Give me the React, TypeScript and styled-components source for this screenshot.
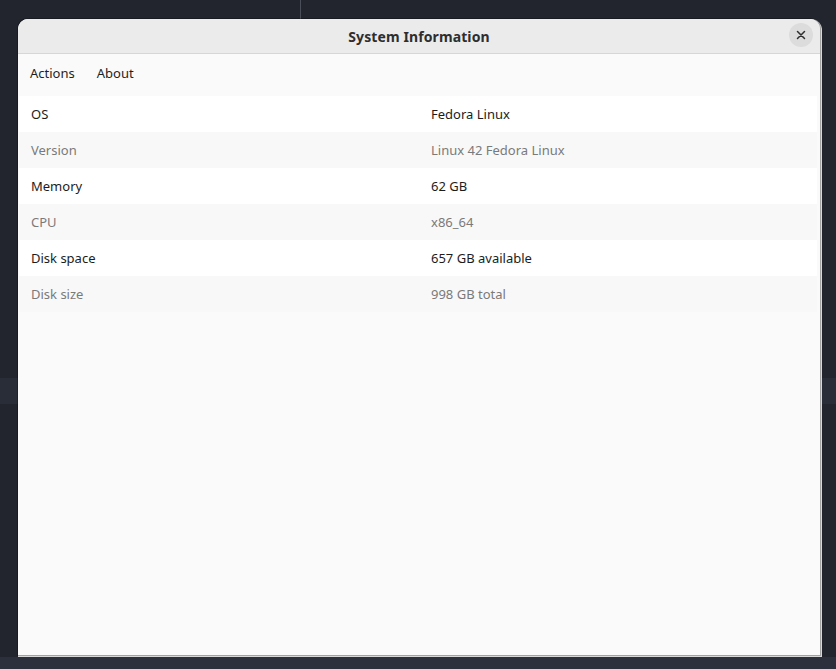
import React from "react";
import styled, { createGlobalStyle } from "styled-components";

const Global = createGlobalStyle`
  html, body { margin: 0; padding: 0; }
  body { background: #23262f; font-family: "Noto Sans", "DejaVu Sans", sans-serif; }
`;

const Desktop = styled.div`
  position: relative;
  width: 836px;
  height: 669px;
  overflow: hidden;
  display: grid;
  grid-template-rows: 378px 26px 253px 12px;
  background: #23262f;
`;

const Band = styled.div<{ $bg: string }>`
  background: ${(p) => p.$bg};
  position: relative;
`;

const Divider = styled.div`
  position: absolute;
  left: 300px;
  top: 0;
  width: 1px;
  height: 20px;
  background: #4a4e58;
`;

const Window = styled.div`
  position: absolute;
  left: 18px;
  top: 19px;
  width: 802px;
  height: 636px;
  background: #fafafa;
  border-radius: 10px 10px 0 0;
  box-shadow: 0 0 0 1px rgba(0, 0, 0, 0.25), 1px 1px 0 1px #d8d8d8;
  display: flex;
  flex-direction: column;
  overflow: hidden;
`;

const TitleBar = styled.div`
  height: 34px;
  flex: none;
  background: #ebebeb;
  border-bottom: 1px solid #d6d6d6;
  display: flex;
  align-items: center;
  justify-content: center;
  position: relative;
`;

const Title = styled.div`
  font-weight: 700;
  font-size: 14px;
  color: #2e2e2e;
  letter-spacing: 0.1px;
`;

const CloseButton = styled.button`
  position: absolute;
  right: 7px;
  top: 4px;
  width: 24px;
  height: 24px;
  border-radius: 50%;
  border: none;
  padding: 0;
  background: #dcdcdc;
  display: flex;
  align-items: center;
  justify-content: center;
`;

const MenuBar = styled.div`
  height: 42px;
  box-sizing: border-box;
  flex: none;
  display: flex;
  align-items: center;
  gap: 22px;
  padding: 0 12px 4px;
`;

const MenuItem = styled.div`
  font-size: 13px;
  color: #1f1f1f;
`;

const List = styled.div`
  margin: 0 3px 0 1px;
  display: flex;
  flex-direction: column;
`;

const Row = styled.div<{ $alt: boolean }>`
  height: 36px;
  display: grid;
  grid-template-columns: 1fr 1fr;
  align-items: center;
  background: ${(p) => (p.$alt ? "#f8f8f8" : "#ffffff")};
  color: ${(p) => (p.$alt ? "#7a7a7a" : "#1c1c1c")};
  font-size: 13px;
`;

const Cell = styled.div<{ $value?: boolean }>`
  padding: 0 12px 0 ${(p) => (p.$value ? "13px" : "12px")};
`;

const rows: [string, string][] = [
  ["OS", "Fedora Linux"],
  ["Version", "Linux 42 Fedora Linux"],
  ["Memory", "62 GB"],
  ["CPU", "x86_64"],
  ["Disk space", "657 GB available"],
  ["Disk size", "998 GB total"],
];

export default function App() {
  return (
    <>
      <Global />
      <Desktop>
        <Band $bg="#22252e">
          <Divider />
        </Band>
        <Band $bg="#292d38" />
        <Band $bg="#22252e" />
        <Band $bg="#2c303c" />
        <Window>
          <TitleBar>
            <Title>System Information</Title>
            <CloseButton aria-label="Close">
              <svg width="10" height="10" viewBox="0 0 10 10">
                <path d="M1.5 1.5 L8.5 8.5 M8.5 1.5 L1.5 8.5" stroke="#2e2e2e" strokeWidth="1.5" strokeLinecap="round" />
              </svg>
            </CloseButton>
          </TitleBar>
          <MenuBar>
            <MenuItem>Actions</MenuItem>
            <MenuItem>About</MenuItem>
          </MenuBar>
          <List>
            {rows.map(([k, v], i) => (
              <Row key={k} $alt={i % 2 === 1}>
                <Cell>{k}</Cell>
                <Cell $value>{v}</Cell>
              </Row>
            ))}
          </List>
        </Window>
      </Desktop>
    </>
  );
}
